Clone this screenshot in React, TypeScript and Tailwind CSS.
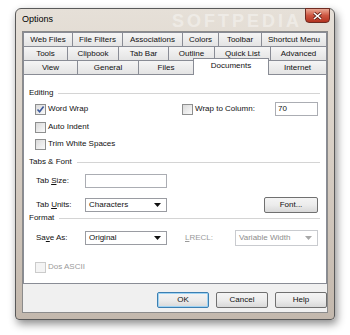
import React from "react";

type Tab = { name: string; w: string; active?: boolean };

const tabRows: Tab[][] = [
  [
    { name: "Web Files", w: "w-[49px]" },
    { name: "File Filters", w: "w-[50px]" },
    { name: "Associations", w: "w-[60px]" },
    { name: "Colors", w: "w-[36px]" },
    { name: "Toolbar", w: "w-[43px]" },
    { name: "Shortcut Menu", w: "flex-1" },
  ],
  [
    { name: "Tools", w: "w-[44px]" },
    { name: "Clipbook", w: "w-[51px]" },
    { name: "Tab Bar", w: "w-[50px]" },
    { name: "Outline", w: "w-[46px]" },
    { name: "Quick List", w: "w-[56px]" },
    { name: "Advanced", w: "flex-1" },
  ],
  [
    { name: "View", w: "w-[54px]" },
    { name: "General", w: "w-[61px]" },
    { name: "Files", w: "w-[55px]" },
    { name: "Documents", w: "w-[76px]", active: true },
    { name: "Internet", w: "flex-1" },
  ],
];

function TabRow({ tabs }: { tabs: Tab[] }) {
  return (
    <div className="flex h-[14px] items-end">
      {tabs.map((t, i) => {
        const last = i === tabs.length - 1;
        if (t.active) {
          return (
            <div
              key={t.name}
              className={`${t.w} relative z-10 -mb-px -mr-px flex h-[17px] items-center justify-center border-l border-r border-t border-[#898c95] bg-white pb-[2px]`}
            >
              {t.name}
            </div>
          );
        }
        return (
          <div
            key={t.name}
            className={`${t.w} flex h-full items-center justify-center border-l border-t border-[#898c95] bg-gradient-to-b from-[#f5f5f5] to-[#e4e4e4] ${last ? "border-r" : ""}`}
          >
            {t.name}
          </div>
        );
      })}
    </div>
  );
}

function Check({ checked, disabled }: { checked?: boolean; disabled?: boolean }) {
  return (
    <span
      className={`flex h-[11px] w-[11px] shrink-0 items-center justify-center border ${
        disabled
          ? "border-[#cbcbcb] bg-[#f4f4f4]"
          : "border-[#8e8f8f] bg-gradient-to-br from-[#dadada] to-[#fafafa]"
      }`}
    >
      {checked && (
        <svg width="9" height="9" viewBox="0 0 9 9">
          <path d="M1.5 4.5 L3.6 6.8 L7.6 1.4" fill="none" stroke="#3d5a9c" strokeWidth="1.6" />
        </svg>
      )}
    </span>
  );
}

function Group({ title }: { title: string }) {
  return (
    <div className="flex h-[12px] items-center gap-[5px]">
      <span>{title}</span>
      <div className="-mr-[2px] h-px flex-1 bg-[#d4d4d4]" />
    </div>
  );
}

function Combo({ value, w, h, disabled }: { value: string; w: string; h: string; disabled?: boolean }) {
  return (
    <div
      className={`${w} ${h} flex items-center justify-between border bg-white pl-[3px] pr-[5px] ${
        disabled ? "border-[#c9cbcf] text-[#8d8d8d]" : "border-[#9a9ca2]"
      }`}
    >
      <span>{value}</span>
      <svg width="7" height="4" viewBox="0 0 7 4">
        <path d="M0 0 H7 L3.5 4 Z" fill={disabled ? "#a8a8a8" : "#111"} />
      </svg>
    </div>
  );
}

function Button({ label, w, def }: { label: string; w: string; def?: boolean }) {
  return (
    <div
      className={`${w} flex h-[16px] items-center justify-center rounded-[2px] border bg-gradient-to-b from-[#f4f4f4] via-[#ececec] to-[#d9d9d9] ${
        def ? "border-[#3c7fb1] shadow-[inset_0_0_0_1px_#9fd3f3]" : "border-[#707070]"
      }`}
    >
      {label}
    </div>
  );
}

export default function App() {
  return (
    <div className="h-[335px] w-[350px] overflow-hidden bg-white pl-[15px] pt-[8px] font-['Liberation_Sans',Arial,sans-serif] text-[8px] text-[#111]">
      <div className="relative h-[312px] w-[320px] rounded-b-[4px] rounded-t-[6px] border border-[#595959] bg-gradient-to-b from-[#e6e0d8] via-[#d6cdc3] to-[#c3b8ad] px-[6px] pb-[6px] shadow-[2px_4px_9px_rgba(0,0,0,0.45)]">
        {/* title bar */}
        <div className="relative flex h-[22px] items-center overflow-hidden text-[9px] text-black">
          Options
          <span className="pointer-events-none absolute left-[150px] top-[2px] h-[20px] text-[18px] font-bold leading-[20px] tracking-[3px] text-white/40">
            SOFTPEDIA
          </span>
        </div>
        <div className="absolute -top-px right-[4px] flex h-[15px] w-[25px] items-center justify-center rounded-b-[4px] border border-[#6e2b22] bg-gradient-to-b from-[#e9a895] via-[#cd5642] to-[#b3321f]">
          <svg width="9" height="8" viewBox="0 0 9 8">
            <path d="M1 1 L8 7 M8 1 L1 7" stroke="#5a1d14" strokeWidth="3" />
            <path d="M1 1 L8 7 M8 1 L1 7" stroke="#fff" strokeWidth="1.6" />
          </svg>
        </div>

        {/* client area */}
        <div className="flex h-[282px] flex-col border border-[#8b8b8b] bg-[#f0f0f0] pb-[4px]">
          <div className="flex flex-col">
            {tabRows.map((row, i) => (
              <TabRow key={i} tabs={row} />
            ))}
          </div>

          <div className="flex h-[210px] flex-col border border-[#898c95] bg-white pl-[5px] pr-[8px] pt-[12px]">
            <Group title="Editing" />
            <div className="mt-[3px] flex h-[14px] items-center">
              <div className="flex w-[153px] items-center gap-[2px] pl-[6px]">
                <Check checked />
                <span>Word Wrap</span>
              </div>
              <div className="flex items-center gap-[2px]">
                <Check />
                <span>Wrap to Column:</span>
              </div>
              <div className="ml-auto flex h-[14px] w-[43px] items-center border border-[#abadb3] bg-white pl-[2px]">70</div>
            </div>
            <div className="mt-[4px] flex h-[14px] items-center gap-[2px] pl-[6px]">
              <Check />
              <span>Auto Indent</span>
            </div>
            <div className="mt-[3px] flex h-[14px] items-center gap-[2px] pl-[6px]">
              <Check />
              <span>Trim White Spaces</span>
            </div>

            <div className="mt-[5px]">
              <Group title="Tabs & Font" />
            </div>
            <div className="mt-[6px] flex h-[14px] items-center">
              <span className="w-[56px] pl-[7px]">
                Tab <span className="underline">S</span>ize:
              </span>
              <div className="h-[14px] w-[82px] border border-[#abadb3] bg-white" />
            </div>
            <div className="mt-[9px] flex h-[16px] items-center">
              <span className="w-[56px] pl-[7px]">
                Tab <span className="underline">U</span>nits:
              </span>
              <Combo value="Characters" w="w-[82px]" h="h-[14px]" />
              <div className="ml-auto">
                <Button label="Font..." w="w-[54px]" />
              </div>
            </div>

            <div className="-mt-[1px]">
              <Group title="Format" />
            </div>
            <div className="mt-[6px] flex h-[16px] items-center">
              <span className="w-[56px] pl-[7px]">
                Sa<span className="underline">v</span>e As:
              </span>
              <Combo value="Original" w="w-[82px]" h="h-[14px]" />
              <span className="ml-[18px] text-[#9a9a9a]">
                <span className="underline">L</span>RECL:
              </span>
              <div className="ml-auto">
                <Combo value="Variable Width" w="w-[83px]" h="h-[16px]" disabled />
              </div>
            </div>
            <div className="mt-[14px] flex h-[14px] items-center gap-[2px] pl-[6px] text-[#9a9a9a]">
              <Check disabled />
              <span>Dos ASCII</span>
            </div>
          </div>

          <div className="mt-[8px] flex justify-end gap-[7px]">
            <Button label="OK" w="w-[52px]" def />
            <Button label="Cancel" w="w-[52px]" />
            <Button label="Help" w="w-[52px]" />
          </div>
        </div>
      </div>
    </div>
  );
}
